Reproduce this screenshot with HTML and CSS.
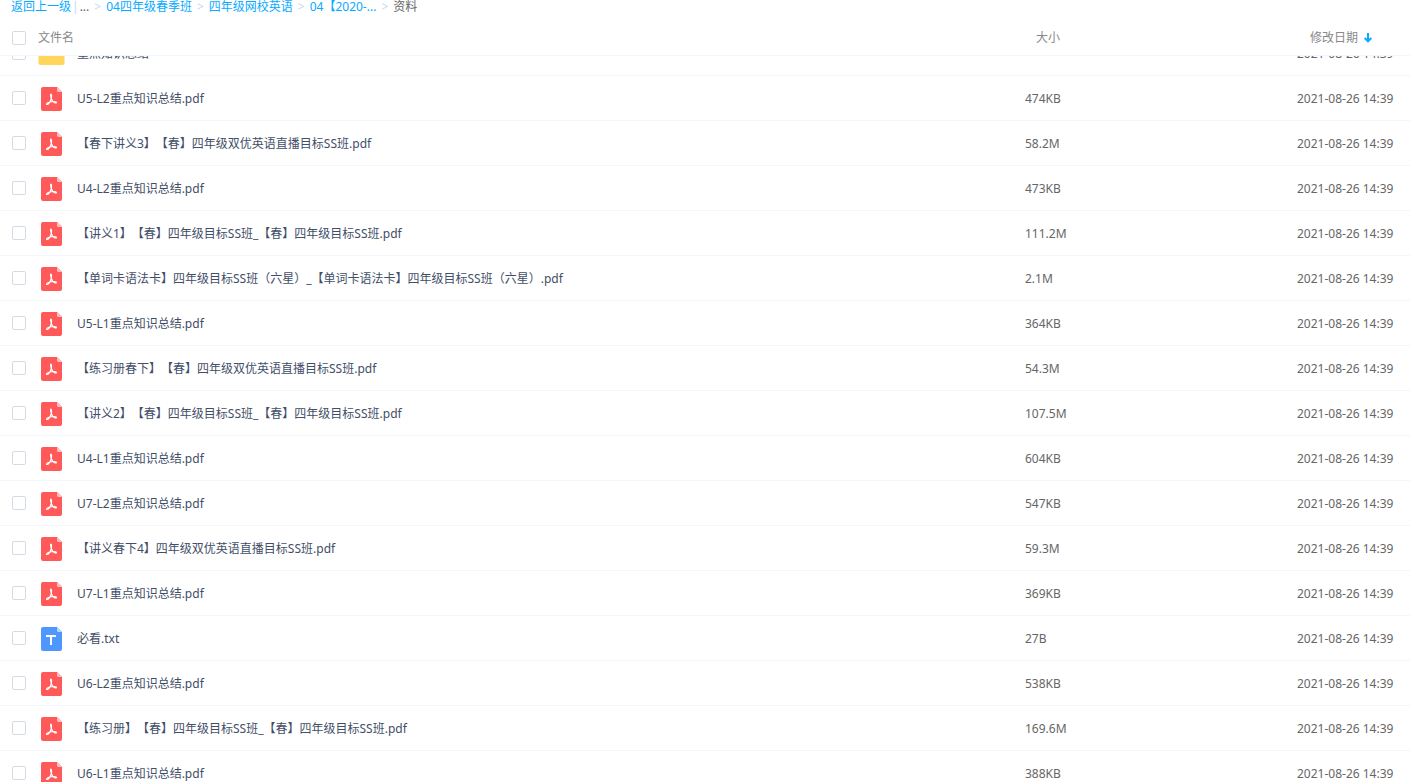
FILE: index.html
```html
<!DOCTYPE html>
<html lang="zh-CN">
<head>
<meta charset="utf-8">
<title>资料</title>
<link rel="stylesheet" href="styles.css">
</head>
<body>
<svg class="sprite" aria-hidden="true">
  <symbol id="pdf" viewBox="0 0 21 24">
    <path fill="#ff5959" d="M2 0H16L21 5V22a2 2 0 0 1-2 2H2a2 2 0 0 1-2-2V2a2 2 0 0 1 2-2z"/>
    <path fill="#ffbdbd" d="M16 0L21 5H17.500a1.500 1.500 0 0 1-1.500-1.500z"/>
    <path fill="none" stroke="#fff" stroke-width="1.100" stroke-linejoin="round" d="M10.300 11.500C9.500 9 9.300 7 9.900 7s1 2 .4 4.500C9.500 14 7.500 17.500 6 17.500c-1.100 0-.6-1.300 2-2.200 2.500-.8 5.300-1 6.700-.5 1.400.6.700 1.500-.6 1.100-1.600-.5-3.100-2.300-3.800-4.400z"/>
  </symbol>
  <symbol id="txt" viewBox="0 0 21 24">
    <path fill="#4d97ff" d="M2 0H16L21 5V22a2 2 0 0 1-2 2H2a2 2 0 0 1-2-2V2a2 2 0 0 1 2-2z"/>
    <path fill="#b8d5ff" d="M16 0L21 5H17.500a1.500 1.500 0 0 1-1.500-1.500z"/>
    <path fill="#fff" d="M5 8h10v2h-4v8H9v-8H5z"/>
  </symbol>
  <symbol id="folder" viewBox="0 0 26 22">
    <path fill="#ffc533" d="M2 0h7l3 3h12v6H0V2a2 2 0 0 1 2-2z"/>
    <path fill="#ffd659" d="M0 6h26v14a2 2 0 0 1-2 2H2a2 2 0 0 1-2-2z"/>
  </symbol>
</svg>
<nav class="crumbs" aria-label="路径">
  <a href="#">返回上一级</a><span class="bar">|</span><span class="dots">...</span><span class="sep">&gt;</span><a href="#">04四年级春季班</a><span class="sep">&gt;</span><a href="#">四年级网校英语</a><span class="sep">&gt;</span><a href="#">04【2020-...</a><span class="sep">&gt;</span><span class="here">资料</span>
</nav>
<table class="files head">
  <thead>
    <tr>
      <th class="pick" scope="col"><input type="checkbox" aria-label="全选"></th>
      <th class="title" scope="col">文件名</th>
      <th class="size" scope="col">大小</th>
      <th class="date" scope="col">修改日期<svg class="arrow" viewBox="0 0 8 10" aria-hidden="true"><path fill="none" stroke="#09aaff" stroke-width="2" d="M4 0v8M.7 5L4 8.300 7.300 5"/></svg></th>
    </tr>
  </thead>
</table>
<main class="list">
  <table class="files body">
    <tbody id="rows"></tbody>
  </table>
</main>
<script src="files.js"></script>
</body>
</html>
```
FILE: styles.css
```css
* {
  box-sizing: border-box;
}

body {
  margin: 0;
  height: 100vh;
  overflow: hidden;
  display: flex;
  flex-direction: column;
  background: #fff;
  color: #666;
  font: 12px/18px "Noto Sans", "Noto Sans CJK SC", sans-serif;
  text-spacing-trim: space-all;
}

.sprite {
  display: none;
}

.crumbs {
  display: flex;
  flex: none;
  height: 19px;
  padding-left: 11px;
  line-height: 13px;
  white-space: nowrap;
}

.crumbs a {
  color: #09aaff;
  text-decoration: none;
}

.bar {
  margin: 0 1px;
  color: #c4d8f4;
}

.sep {
  margin: 0 5px;
  color: #c4d8f4;
}

.files {
  width: 100%;
  table-layout: fixed;
  border-collapse: separate;
  border-spacing: 0;
}

.files th,
.files td {
  padding: 2px 0 0;
  border-bottom: 1px solid #f2f6fd;
  font-weight: normal;
  text-align: left;
  white-space: nowrap;
}

.head {
  flex: none;
}

.files.head th {
  height: 37px;
  padding-top: 1px;
  color: #888;
}

.files .pick {
  width: 38px;
  padding-left: 12px;
}

.files.body .pick {
  padding-top: 0;
}

.files.head .pick {
  padding-top: 2px;
}

.files .size {
  width: 272px;
}

.files .date {
  width: 113px;
}

.files.head .size {
  padding-left: 11px;
}

.files.head .date {
  padding-left: 13px;
}

.arrow {
  width: 8px;
  height: 10px;
  margin-left: 6px;
  vertical-align: -1px;
}

input[type="checkbox"] {
  appearance: none;
  display: block;
  width: 14px;
  height: 14px;
  margin: 0;
  border: 1px solid #d5dbe5;
  border-radius: 2px;
  background: #fff;
}

.list {
  flex: 1;
  min-height: 0;
  overflow: hidden;
}

/* The list is scrolled part of the way past its first row. */
.body {
  margin-top: -25px;
}

.body td {
  height: 45px;
}

.name {
  display: flex;
  align-items: center;
  color: #424e67;
}

.icon {
  flex: none;
  width: 27px;
  height: 24px;
  margin-right: 12px;
}

.icon.folder {
  height: 22px;
}
```
FILE: files.js
```js
const files = [
  ["folder", "重点知识总结", ""],
  ["pdf", "U5-L2重点知识总结.pdf", "474KB"],
  ["pdf", "【春下讲义3】【春】四年级双优英语直播目标SS班.pdf", "58.2M"],
  ["pdf", "U4-L2重点知识总结.pdf", "473KB"],
  ["pdf", "【讲义1】【春】四年级目标SS班_【春】四年级目标SS班.pdf", "111.2M"],
  ["pdf", "【单词卡语法卡】四年级目标SS班（六星）_【单词卡语法卡】四年级目标SS班（六星）.pdf", "2.1M"],
  ["pdf", "U5-L1重点知识总结.pdf", "364KB"],
  ["pdf", "【练习册春下】【春】四年级双优英语直播目标SS班.pdf", "54.3M"],
  ["pdf", "【讲义2】【春】四年级目标SS班_【春】四年级目标SS班.pdf", "107.5M"],
  ["pdf", "U4-L1重点知识总结.pdf", "604KB"],
  ["pdf", "U7-L2重点知识总结.pdf", "547KB"],
  ["pdf", "【讲义春下4】四年级双优英语直播目标SS班.pdf", "59.3M"],
  ["pdf", "U7-L1重点知识总结.pdf", "369KB"],
  ["txt", "必看.txt", "27B"],
  ["pdf", "U6-L2重点知识总结.pdf", "538KB"],
  ["pdf", "【练习册】【春】四年级目标SS班_【春】四年级目标SS班.pdf", "169.6M"],
  ["pdf", "U6-L1重点知识总结.pdf", "388KB"]
];

document.getElementById("rows").innerHTML = files.map(([type, name, size], i) => `
  <tr>
    <td class="pick"><input type="checkbox" id="file${i}"></td>
    <td class="title"><label class="name" for="file${i}"><svg class="icon ${type}" aria-hidden="true"><use href="#${type}"/></svg>${name}</label></td>
    <td class="size">${size}</td>
    <td class="date">2021-08-26 14:39</td>
  </tr>`).join("");
```
